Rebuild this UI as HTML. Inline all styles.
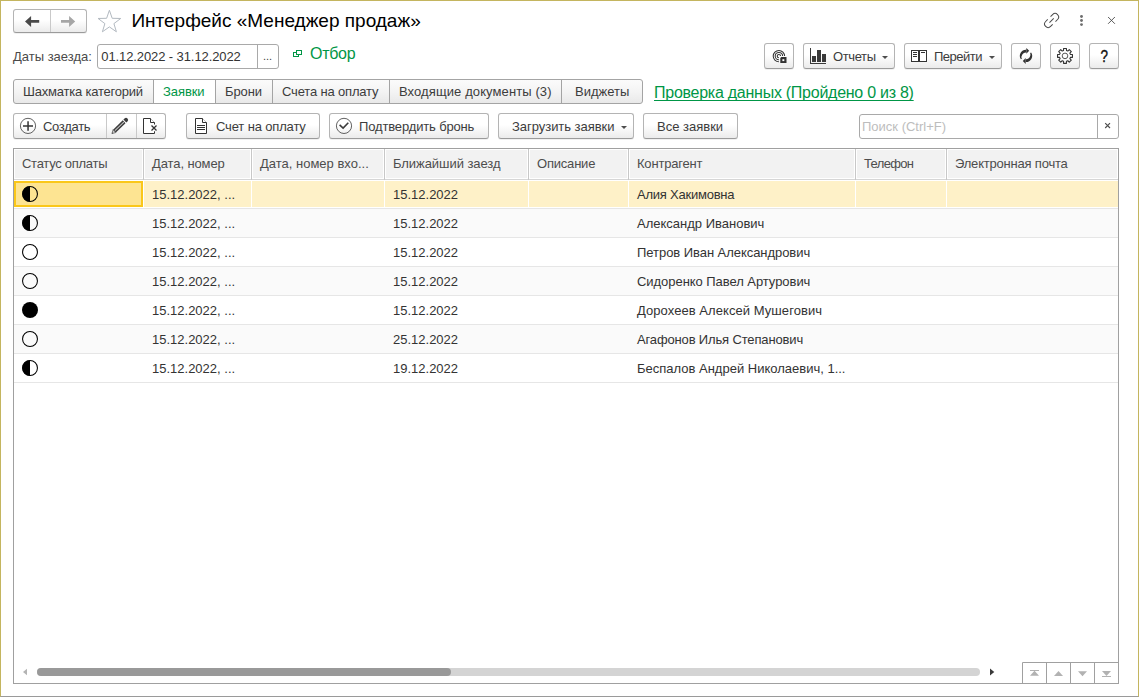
<!DOCTYPE html>
<html lang="ru">
<head>
<meta charset="utf-8">
<title>Интерфейс «Менеджер продаж»</title>
<style>
*{box-sizing:border-box;margin:0;padding:0}
html,body{width:1139px;height:697px;overflow:hidden;background:#fff}
body{font-family:"Liberation Sans",sans-serif;font-size:13px;color:#333;position:relative}
.abs{position:absolute}
#frame{position:absolute;left:0;top:0;width:1139px;height:697px;border-top:1px solid #c4b55f;border-left:1px solid #c4b55f;border-right:1px solid #c4b55f;border-bottom:1px solid #9a9a9a;pointer-events:none}
.btn{position:absolute;height:26px;border:1px solid #b4b4b4;border-bottom-color:#9b9b9b;border-radius:3px;background:linear-gradient(#fff 0%,#fff 45%,#ebebeb 100%);box-shadow:0 1px 0 rgba(0,0,0,.06);white-space:nowrap}
#tabs{height:25px;border-color:#a4a4a4;box-shadow:none;background:linear-gradient(#fbfbfb 0%,#f4f4f4 50%,#e9e9e9 100%)}
#tabs .sep{background:#a4a4a4}
.btn .t{transform:translateY(.6px)}
#tabs .t{transform:none}
.btn .t{position:absolute;top:4px;line-height:15px;color:#3c3c3c;white-space:nowrap}
.sep{position:absolute;top:0;bottom:0;width:1px;background:#c9c9c9}
.dd{position:absolute;width:0;height:0;border-left:3.5px solid transparent;border-right:3.5px solid transparent;border-top:3.5px solid #4d4d4d}
svg{position:absolute;overflow:visible}
.inp{position:absolute;height:25px;border:1px solid #a9a9a9;border-radius:3px;background:#fff}
.hc{position:absolute;top:1px;height:28px;background:#f2f2f2;white-space:nowrap;overflow:hidden}
.hc span{position:absolute;left:7px;top:6px;line-height:15px;color:#4d4d4d}
.row{position:absolute;left:0;width:1104px;height:28px}
.row.alt{background:#fafafa}
.row.sel{background:linear-gradient(#fff 0,#fff 1px,#fef1c8 1px,#fef1c8 27px,#fff 27px)}
.row span{position:absolute;top:7px;line-height:15px;white-space:nowrap;color:#333}
.cur{position:absolute;left:0;top:1px;width:129px;height:26px;background:#fde492;border:2px solid #fac71a}
</style>
</head>
<body>

<!-- ===== title row ===== -->
<div class="btn" style="left:13px;top:9px;width:74px;height:24px">
  <div class="sep" style="left:36px"></div>
  <svg style="left:10.8px;top:6px" width="15" height="11" viewBox="0 0 15 11"><path d="M0 5.45 L6.1 0 L6.1 4.1 L14.2 4.1 L14.2 6.8 L6.1 6.8 L6.1 10.9 Z" fill="#4a4a4a"/></svg>
  <svg style="left:47px;top:6px" width="15" height="11" viewBox="0 0 15 11"><path d="M14.2 5.45 L8.1 0 L8.1 4.1 L0 4.1 L0 6.8 L8.1 6.8 L8.1 10.9 Z" fill="#a6a6a6"/></svg>
</div>
<svg style="left:97px;top:9px" width="25" height="24" viewBox="0 0 25 24"><path d="M12.40 1.25 L15.19 9.31 L23.72 9.47 L16.92 14.62 L19.39 22.78 L12.40 17.90 L5.41 22.78 L7.88 14.62 L1.08 9.47 L9.61 9.31 Z" fill="#fff" stroke="#b3bac1" stroke-width="1"/></svg>
<div class="abs" style="left:131.4px;top:10px;transform:translateY(0.45px);font-size:19px;line-height:22px;color:#000;white-space:nowrap">Интерфейс «Менеджер продаж»</div>

<svg style="left:0;top:0" width="1139" height="40" viewBox="0 0 1139 40">
  <g transform="translate(1051.6 20.5) rotate(-45)" fill="none" stroke="#4a4a4a" stroke-width="1"><path d="M2 -3.5 L4.9 -3.5 A3.5 3.5 0 0 1 4.9 3.5 L2 3.5"/><g transform="rotate(180)"><path d="M2 -3.5 L4.9 -3.5 A3.5 3.5 0 0 1 4.9 3.5 L2 3.5"/></g><path d="M-3 0 L3 0"/></g>
  <g fill="#6e6e6e"><circle cx="1081.5" cy="16.5" r="1.45"/><circle cx="1081.5" cy="20.5" r="1.45"/><circle cx="1081.5" cy="24.6" r="1.45"/></g>
  <path d="M1108.1 17 L1114.9 23.8 M1114.9 17 L1108.1 23.8" stroke="#4a4a4a" stroke-width="0.9" fill="none"/>
</svg>
<!-- ===== filter row ===== -->
<div class="abs" style="left:13px;top:49px;line-height:15px;white-space:nowrap;color:#4a4a4a">Даты заезда:</div>
<div class="inp" style="left:97px;top:44px;width:182px">
  <div class="abs" style="left:3.3px;top:4px;line-height:15px;white-space:nowrap;color:#333;letter-spacing:-0.1px">01.12.2022 - 31.12.2022</div>
  <div class="sep" style="left:159px;background:#a9a9a9"></div>
  <div class="abs" style="left:165px;top:4px;line-height:15px;font-size:11px;color:#444">...</div>
</div>
<svg style="left:293px;top:50px" width="9" height="7" viewBox="0 0 9 7"><rect x="0.5" y="2.5" width="5" height="4" fill="none" stroke="#009646"/><rect x="3.5" y="0.5" width="5" height="4" fill="#fff" stroke="#009646"/></svg>
<div class="abs" style="left:310px;top:44px;transform:translateY(0.5px);font-size:16px;line-height:18px;color:#009646;white-space:nowrap;letter-spacing:-0.3px">Отбор</div>

<!-- ===== right toolbar ===== -->
<div class="btn" style="left:764px;top:43px;width:30px"><svg style="left:0;top:0" width="28" height="23" viewBox="0 0 28 23"><g fill="none" stroke="#333" stroke-width="1.05"><path d="M19.6 12.1 A5.7 5.7 0 1 0 13.9 17.8"/><path d="M17.6 12.1 A3.7 3.7 0 1 0 13.9 15.8"/><path d="M15.6 12.1 A1.7 1.7 0 1 0 13.9 13.8"/></g><path d="M16.3 13.1 H21.5 V18.9 H15.3 V14.1 Z" fill="#333"/><rect x="17.4" y="15.2" width="1.9" height="1.9" fill="#fff"/></svg></div>
<div class="btn" style="left:803px;top:43px;width:92px">
  <svg style="left:0;top:0" width="28" height="23" viewBox="0 0 28 23"><g fill="#3a3a3a"><rect x="6" y="4" width="1" height="16"/><rect x="6" y="19" width="16" height="1"/><rect x="8" y="12" width="4" height="6"/><rect x="13" y="6" width="4" height="12"/><rect x="18" y="10" width="4" height="8"/></g></svg>
  <div class="t" style="left:29px;letter-spacing:-0.38px">Отчеты</div>
  <div class="dd" style="left:78px;top:12px"></div>
</div>
<div class="btn" style="left:904px;top:43px;width:98px">
  <svg style="left:0;top:0" width="28" height="23" viewBox="0 0 28 23"><rect x="6.5" y="6.5" width="15" height="11" fill="#fff" stroke="#333" stroke-width="1"/><g fill="#333"><rect x="13" y="6" width="2" height="12"/><rect x="8" y="8" width="4" height="1"/><rect x="8" y="10" width="4" height="1"/><rect x="8" y="12" width="4" height="1"/><rect x="16" y="8" width="4" height="1"/></g></svg>
  <div class="t" style="left:29px;letter-spacing:-0.5px">Перейти</div>
  <div class="dd" style="left:84px;top:12px"></div>
</div>
<div class="btn" style="left:1011px;top:43px;width:30px"><svg style="left:0;top:0" width="28" height="23" viewBox="0 0 28 23"><g transform="translate(14 11.9)"><path d="M-5.10 3.44 A6.15 6.15 0 0 1 0.32 -6.14 L0.17 -3.30 A4.4 4.4 0 0 0 -4.15 2.80 Z" fill="#333"/><path d="M0.3 -8 L3.2 -5.2 L0.3 -2.2 Z" fill="#333"/><g transform="rotate(180)"><path d="M-5.10 3.44 A6.15 6.15 0 0 1 0.32 -6.14 L0.17 -3.30 A4.4 4.4 0 0 0 -4.15 2.80 Z" fill="#333"/><path d="M0.3 -8 L3.2 -5.2 L0.3 -2.2 Z" fill="#333"/></g></g></svg></div>
<div class="btn" style="left:1050px;top:43px;width:30px"><svg style="left:0;top:0" width="28" height="23" viewBox="0 0 28 23"><path d="M12.55 6.49L12.55 4.44L15.45 4.44L15.45 6.49A5.6 5.6 0 0 1 16.80 7.05L18.25 5.60L20.30 7.65L18.85 9.10A5.6 5.6 0 0 1 19.41 10.45L21.46 10.45L21.46 13.35L19.41 13.35A5.6 5.6 0 0 1 18.85 14.70L20.30 16.15L18.25 18.20L16.80 16.75A5.6 5.6 0 0 1 15.45 17.31L15.45 19.36L12.55 19.36L12.55 17.31A5.6 5.6 0 0 1 11.20 16.75L9.75 18.20L7.70 16.15L9.15 14.70A5.6 5.6 0 0 1 8.59 13.35L6.54 13.35L6.54 10.45L8.59 10.45A5.6 5.6 0 0 1 9.15 9.10L7.70 7.65L9.75 5.60L11.20 7.05A5.6 5.6 0 0 1 12.55 6.49Z" fill="none" stroke="#333" stroke-width="1.1" stroke-linejoin="round"/><circle cx="14" cy="11.9" r="2.8" fill="none" stroke="#444" stroke-width="0.9"/></svg></div>
<div class="btn" style="left:1089px;top:43px;width:30px">
  <div class="abs" style="left:0;width:28px;top:3px;text-align:center;font-size:16.4px;line-height:19px;color:#111;-webkit-text-stroke:.4px #111;transform:translateX(.3px) scaleX(.82)">?</div>
</div>

<!-- ===== tabs ===== -->
<div id="tabs" class="btn" style="left:13px;top:79px;width:630px">
  <div class="abs" style="left:140px;top:0;width:62px;height:23px;background:#fff"></div>
  <div class="sep" style="left:139px"></div>
  <div class="sep" style="left:201px"></div>
  <div class="sep" style="left:258px"></div>
  <div class="sep" style="left:375px"></div>
  <div class="sep" style="left:547px"></div>
  <div class="t" style="left:9px;letter-spacing:-0.21px">Шахматка категорий</div>
  <div class="t" style="left:149px;color:#009646;letter-spacing:-0.08px">Заявки</div>
  <div class="t" style="left:211px;letter-spacing:-0.1px">Брони</div>
  <div class="t" style="left:268px;letter-spacing:-0.17px">Счета на оплату</div>
  <div class="t" style="left:385px;letter-spacing:0.1px">Входящие документы (3)</div>
  <div class="t" style="left:561px">Виджеты</div>
</div>
<div class="abs" style="left:654px;top:84px;font-size:16px;line-height:18px;color:#009646;white-space:nowrap;letter-spacing:-0.26px;text-decoration:underline;text-decoration-skip-ink:none;text-underline-offset:2px;text-decoration-thickness:1px">Проверка данных (Пройдено 0 из 8)</div>

<!-- ===== command bar ===== -->
<div class="btn" style="left:13px;top:113px;width:153px">
  <svg style="left:0;top:0" width="151" height="23" viewBox="0 0 151 23"><circle cx="14" cy="11.9" r="7.6" fill="none" stroke="#3a3a3a" stroke-width="0.8"/><path d="M9 11.95 H19 M14.05 7.2 V16.8" stroke="#333" stroke-width="1.5" fill="none"/><g transform="translate(97.9 19.6) rotate(-44)"><path d="M0 0 L3.6 -2 L3.6 2 Z" fill="#cfcfcf" stroke="#444" stroke-width="0.6"/><path d="M0 0 L1.2 -0.7 L1.2 0.7Z" fill="#444"/><rect x="3.6" y="-2" width="13.4" height="4" fill="#3c3c3c"/><rect x="4.2" y="-0.5" width="12.4" height="1" fill="#c4c4c4"/><path d="M18 -2.1 H19.6 A2.1 2.1 0 0 1 19.6 2.1 H18 Z" fill="#3c3c3c"/></g><path d="M140.5 10.5 V8.5 L136.5 4.5 H129.5 V19.5 H140.5 V17.3" fill="#fff" stroke="none"/><path d="M136.5 4.5 L140.5 8.5" stroke="#bdbdbd" stroke-width="1" fill="none"/><path d="M140.5 10.5 V8.5 H136.5 V4.5 H129.5 V19.5 H140.5 V17.3" fill="none" stroke="#333" stroke-width="1"/><path d="M137.5 11.5 L142.5 16.5 M142.5 11.5 L137.5 16.5" stroke="#333" stroke-width="1.3" fill="none"/></svg>
  <div class="sep" style="left:92px"></div>
  <div class="sep" style="left:122px"></div>
  <div class="t" style="left:29px;letter-spacing:-0.3px">Создать</div>
</div>
<div class="btn" style="left:186px;top:113px;width:134px">
  <svg style="left:0;top:0" width="28" height="23" viewBox="0 0 28 23"><path d="M8.5 4.5 H15.5 L19.5 8.5 V19.5 H8.5 Z" fill="#fff" stroke="none"/><path d="M15.5 4.5 L19.5 8.5" stroke="#bdbdbd" fill="none"/><path d="M15.5 4.5 V8.5 H19.5 V19.5 H8.5 V4.5 Z" fill="none" stroke="#333"/><g fill="#333"><rect x="10" y="11" width="8" height="1"/><rect x="10" y="13" width="8" height="1"/><rect x="10" y="15" width="8" height="1"/></g></svg>
  <div class="t" style="left:29px;letter-spacing:-0.15px">Счет на оплату</div>
</div>
<div class="btn" style="left:329px;top:113px;width:160px">
  <svg style="left:0;top:0" width="28" height="23" viewBox="0 0 28 23"><circle cx="14" cy="11.9" r="7.6" fill="none" stroke="#3a3a3a" stroke-width="0.8"/><path d="M9.6 10.9 L13.1 14.1 L18.3 8.8" fill="none" stroke="#3a3a3a" stroke-width="1.6"/></svg>
  <div class="t" style="left:29px;letter-spacing:-0.15px">Подтвердить бронь</div>
</div>
<div class="btn" style="left:498px;top:113px;width:136px">
  <div class="t" style="left:13px;letter-spacing:-0.04px">Загрузить заявки</div>
  <div class="dd" style="left:122px;top:12px"></div>
</div>
<div class="btn" style="left:643px;top:113px;width:95px">
  <div class="t" style="left:13px">Все заявки</div>
</div>
<div class="inp" style="left:859px;top:114px;width:260px">
  <div class="abs" style="left:2px;top:4px;line-height:15px;white-space:nowrap;color:#bdbdbd">Поиск (Ctrl+F)</div>
  <div class="sep" style="left:237px;background:#a9a9a9"></div>
  <svg style="left:0;top:0" width="258" height="23" viewBox="0 0 258 23"><path d="M245.2 8.2 L250 13 M250 8.2 L245.2 13" stroke="#4d4d4d" stroke-width="1.15" fill="none"/></svg>
</div>

<!-- ===== table ===== -->
<div id="grid" class="abs" style="left:13px;top:148px;width:1106px;height:536px;border:1px solid #a0a0a0;background:#fff">
  <div class="abs" style="left:0;top:30px;width:1104px;height:1px;background:#d6d6d6"></div>
  <div class="hc" style="left:1px;width:127px"><span style="letter-spacing:-0.27px">Статус оплаты</span></div>
  <div class="hc" style="left:131px;width:105px"><span style="letter-spacing:-0.1px">Дата, номер</span></div>
  <div class="hc" style="left:239px;width:130px"><span>Дата, номер вхо...</span></div>
  <div class="hc" style="left:372px;width:141px"><span style="letter-spacing:-0.06px">Ближайший заезд</span></div>
  <div class="hc" style="left:516px;width:97px"><span style="letter-spacing:-0.2px">Описание</span></div>
  <div class="hc" style="left:616px;width:224px"><span style="letter-spacing:-0.2px">Контрагент</span></div>
  <div class="hc" style="left:843px;width:88px"><span style="letter-spacing:-0.65px">Телефон</span></div>
  <div class="hc" style="left:934px;width:169px"><span style="letter-spacing:-0.2px">Электронная почта</span></div>
  <div class="abs" style="left:129px;top:0;width:1px;height:31px;background:#c8c8c8"></div>
  <div class="abs" style="left:237px;top:0;width:1px;height:31px;background:#c8c8c8"></div>
  <div class="abs" style="left:370px;top:0;width:1px;height:31px;background:#c8c8c8"></div>
  <div class="abs" style="left:514px;top:0;width:1px;height:31px;background:#c8c8c8"></div>
  <div class="abs" style="left:614px;top:0;width:1px;height:31px;background:#c8c8c8"></div>
  <div class="abs" style="left:841px;top:0;width:1px;height:31px;background:#c8c8c8"></div>
  <div class="abs" style="left:932px;top:0;width:1px;height:31px;background:#c8c8c8"></div>
  <div class="row sel" style="top:31px">
    <div class="cur"></div>
    <svg style="left:8px;top:6px" width="16" height="16" viewBox="0 0 16 16"><circle cx="8" cy="8" r="7.45" fill="none" stroke="#000" stroke-width="1.05"/><path d="M8 0.3 A7.7 7.7 0 0 0 8 15.7 Z" fill="#000"/></svg>
    <span style="left:138px">15.12.2022, ...</span><span style="left:379px">15.12.2022</span><span style="left:623px;letter-spacing:-0.23px">Алия Хакимовна</span>
  </div>
  <div class="abs" style="left:0;top:59px;width:1104px;height:1px;background:#e6e6e6"></div>
  <div class="row alt" style="top:60px">
    <svg style="left:8px;top:6px" width="16" height="16" viewBox="0 0 16 16"><circle cx="8" cy="8" r="7.45" fill="none" stroke="#000" stroke-width="1.05"/><path d="M8 0.3 A7.7 7.7 0 0 0 8 15.7 Z" fill="#000"/></svg>
    <span style="left:138px">15.12.2022, ...</span><span style="left:379px">15.12.2022</span><span style="left:623px">Александр Иванович</span>
  </div>
  <div class="abs" style="left:0;top:88px;width:1104px;height:1px;background:#e6e6e6"></div>
  <div class="row" style="top:89px">
    <svg style="left:8px;top:6px" width="16" height="16" viewBox="0 0 16 16"><circle cx="8" cy="8" r="7.45" fill="none" stroke="#000" stroke-width="1.05"/></svg>
    <span style="left:138px">15.12.2022, ...</span><span style="left:379px">15.12.2022</span><span style="left:623px;letter-spacing:-0.05px">Петров Иван Александрович</span>
  </div>
  <div class="abs" style="left:0;top:117px;width:1104px;height:1px;background:#e6e6e6"></div>
  <div class="row alt" style="top:118px">
    <svg style="left:8px;top:6px" width="16" height="16" viewBox="0 0 16 16"><circle cx="8" cy="8" r="7.45" fill="none" stroke="#000" stroke-width="1.05"/></svg>
    <span style="left:138px">15.12.2022, ...</span><span style="left:379px">15.12.2022</span><span style="left:623px;letter-spacing:-0.05px">Сидоренко Павел Артурович</span>
  </div>
  <div class="abs" style="left:0;top:146px;width:1104px;height:1px;background:#e6e6e6"></div>
  <div class="row" style="top:147px">
    <svg style="left:8px;top:6px" width="16" height="16" viewBox="0 0 16 16"><circle cx="8" cy="8" r="8" fill="#000"/></svg>
    <span style="left:138px">15.12.2022, ...</span><span style="left:379px">15.12.2022</span><span style="left:623px;letter-spacing:0.06px">Дорохеев Алексей Мушегович</span>
  </div>
  <div class="abs" style="left:0;top:175px;width:1104px;height:1px;background:#e6e6e6"></div>
  <div class="row alt" style="top:176px">
    <svg style="left:8px;top:6px" width="16" height="16" viewBox="0 0 16 16"><circle cx="8" cy="8" r="7.45" fill="none" stroke="#000" stroke-width="1.05"/></svg>
    <span style="left:138px">15.12.2022, ...</span><span style="left:379px">25.12.2022</span><span style="left:623px;letter-spacing:-0.15px">Агафонов Илья Степанович</span>
  </div>
  <div class="abs" style="left:0;top:204px;width:1104px;height:1px;background:#e6e6e6"></div>
  <div class="row" style="top:205px">
    <svg style="left:8px;top:6px" width="16" height="16" viewBox="0 0 16 16"><circle cx="8" cy="8" r="7.45" fill="none" stroke="#000" stroke-width="1.05"/><path d="M8 0.3 A7.7 7.7 0 0 0 8 15.7 Z" fill="#000"/></svg>
    <span style="left:138px">15.12.2022, ...</span><span style="left:379px">19.12.2022</span><span style="left:623px">Беспалов Андрей Николаевич, 1...</span>
  </div>
  <div class="abs" style="left:0;top:233px;width:1104px;height:1px;background:#e6e6e6"></div>
  <div class="abs" style="left:129px;top:31px;width:1px;height:28px;background:#fff"></div>
  <div class="abs" style="left:237px;top:31px;width:1px;height:28px;background:#fff"></div>
  <div class="abs" style="left:370px;top:31px;width:1px;height:28px;background:#fff"></div>
  <div class="abs" style="left:514px;top:31px;width:1px;height:28px;background:#fff"></div>
  <div class="abs" style="left:614px;top:31px;width:1px;height:28px;background:#fff"></div>
  <div class="abs" style="left:841px;top:31px;width:1px;height:28px;background:#fff"></div>
  <div class="abs" style="left:932px;top:31px;width:1px;height:28px;background:#fff"></div>
  <svg style="left:0;top:511px" width="1104" height="23" viewBox="14 660 1104 23">
    <path d="M23 672 L27 668.7 L27 675.3 Z" fill="#b4b4b4"/>
    <rect x="37" y="668" width="943" height="8" rx="4" fill="#d4d4d4"/>
    <rect x="37" y="668" width="414" height="8" rx="4" fill="#999"/>
    <path d="M994.3 672 L990 668.5 L990 675.5 Z" fill="#3a3a3a"/>
    <g fill="none" stroke="#a0a0a0" stroke-width="1"><path d="M1022.5 683 V662.5 H1118"/><path d="M1046.5 663 V683 M1070.5 663 V683 M1094.5 663 V683"/></g>
    <g fill="#b2b2b2">
      <rect x="1030" y="670" width="9" height="1"/><path d="M1030 675.8 L1034.5 670.8 L1039 675.8 Z"/>
      <path d="M1054 676 L1058.5 671 L1063 676 Z"/>
      <path d="M1078 671.3 L1087 671.3 L1082.5 676.3 Z"/>
      <path d="M1102 671 L1111 671 L1106.5 676 Z"/><rect x="1102" y="676" width="9" height="1"/>
    </g>
  </svg>
</div>

<div id="frame"></div>
</body>
</html>
